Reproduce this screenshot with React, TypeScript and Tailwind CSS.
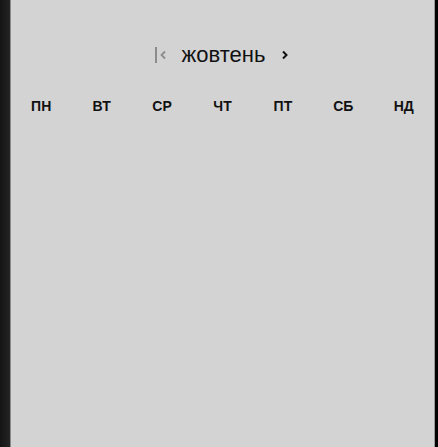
import React from "react";

const days = ["ПН", "ВТ", "СР", "ЧТ", "ПТ", "СБ", "НД"];

export default function App() {
  return (
    <div
      className="flex h-[447px] w-[438px] bg-black"
      style={{ fontFamily: '"Liberation Sans", Arial, sans-serif' }}
    >
      <div className="w-[10px] bg-gradient-to-r from-[#141414] to-[#242424]" />
      <div className="w-[1px] bg-[#8a8a8a]" />
      <div className="flex flex-1 flex-col bg-[#d3d3d3]">
        <div className="h-[41px]" />
        <div className="flex items-center justify-center h-[28px]">
          <div className="flex items-center gap-[1px] text-[#8c8c8c]">
            <div className="h-[16px] w-[2px] bg-[#8c8c8c]" />
            <svg width="10" height="14" viewBox="0 0 10 14" fill="none">
              <path d="M7 3.5 L3.5 7 L7 10.5" stroke="#8c8c8c" strokeWidth="1.8" />
            </svg>
          </div>
          <span className="ml-[14px] mr-[15px] text-[22px] leading-none text-[#111]">
            жовтень
          </span>
          <svg width="10" height="14" viewBox="0 0 10 14" fill="none">
            <path d="M3 3.5 L6.5 7 L3 10.5" stroke="#111" strokeWidth="2" />
          </svg>
        </div>
        <div className="mt-[29px] grid grid-cols-7">
          {days.map((d) => (
            <div key={d} className="text-center text-[14px] font-bold leading-[16px] text-[#111]">
              {d}
            </div>
          ))}
        </div>
      </div>
      <div className="w-[1px] bg-[#9a9a9a]" />
      <div className="w-[3px] bg-black" />
    </div>
  );
}
